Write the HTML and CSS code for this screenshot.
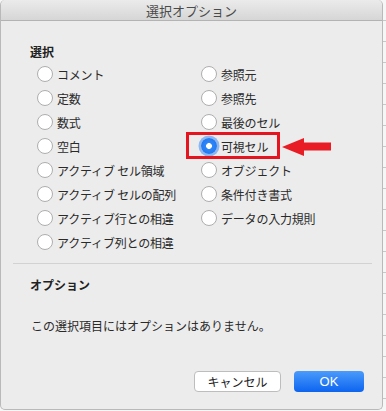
FILE: index.html
```html
<!DOCTYPE html>
<html lang="ja">
<head>
<meta charset="utf-8">
<link rel="stylesheet" href="styles.css">
</head>
<body>
<div class="dialog">
  <div class="titlebar">選択オプション</div>
  <div class="content">
    <div class="heading sel-heading">選択</div>
    <div class="choices">
      <div class="col col-left">
        <label class="row"><span class="radio"></span><span class="lbl">コメント</span></label>
        <label class="row"><span class="radio"></span><span class="lbl">定数</span></label>
        <label class="row"><span class="radio"></span><span class="lbl">数式</span></label>
        <label class="row"><span class="radio"></span><span class="lbl">空白</span></label>
        <label class="row"><span class="radio"></span><span class="lbl">アクティブ セル領域</span></label>
        <label class="row"><span class="radio"></span><span class="lbl">アクティブ セルの配列</span></label>
        <label class="row"><span class="radio"></span><span class="lbl">アクティブ行との相違</span></label>
        <label class="row"><span class="radio"></span><span class="lbl">アクティブ列との相違</span></label>
      </div>
      <div class="col col-right">
        <label class="row"><span class="radio"></span><span class="lbl">参照元</span></label>
        <label class="row"><span class="radio"></span><span class="lbl">参照先</span></label>
        <label class="row"><span class="radio"></span><span class="lbl">最後のセル</span></label>
        <label class="row row-selected"><span class="radio checked"></span><span class="lbl">可視セル</span>
          <span class="highlight"></span>
          <svg class="arrow" width="50" height="20" viewBox="0 0 50 20"><polygon points="0,10 22,1 22,5.5 49,5.5 49,13.5 22,13.5 22,19" fill="#e81c24"/></svg>
        </label>
        <label class="row"><span class="radio"></span><span class="lbl">オブジェクト</span></label>
        <label class="row"><span class="radio"></span><span class="lbl">条件付き書式</span></label>
        <label class="row"><span class="radio"></span><span class="lbl">データの入力規則</span></label>
      </div>
    </div>
    <div class="separator"></div>
    <div class="heading opt-heading">オプション</div>
    <div class="note">この選択項目にはオプションはありません。</div>
    <div class="buttons">
      <button class="btn btn-cancel">キャンセル</button>
      <button class="btn btn-ok">OK</button>
    </div>
  </div>
</div>
</body>
</html>
```

FILE: styles.css
```css
html, body {
  margin: 0;
  padding: 0;
}
body {
  width: 386px;
  height: 411px;
  overflow: hidden;
  background-color: #f6f6f6;
  background-image: repeating-linear-gradient(to bottom, transparent 0, transparent 20px, #c8c8c8 20px, #c8c8c8 21px);
  font-family: "Noto Sans CJK JP", "Noto Sans", sans-serif;
  color: #2a2a2a;
}
.dialog {
  box-sizing: border-box;
  width: 383px;
  height: 410px;
  background: #ececec;
  border: 1px solid #b9b9b9;
  border-top: none;
  border-radius: 5px;
  display: flex;
  flex-direction: column;
  overflow: hidden;
}
.titlebar {
  height: 20px;
  border-bottom: 1px solid #b3b3b3;
  background: linear-gradient(to bottom, #ebebeb, #d6d6d6);
  text-align: center;
  font-size: 13px;
  line-height: 21px;
  color: #4a4a4a;
  border-radius: 5px 5px 0 0;
}
.content {
  flex: 1;
  display: flex;
  flex-direction: column;
  padding: 23px 0 17px 0;
}
.heading {
  font-size: 12px;
  font-weight: bold;
  line-height: 16px;
  height: 16px;
  color: #222;
  padding-left: 29px;
}
.choices {
  display: flex;
  margin-top: 2px;
  padding-left: 36px;
}
.col {
  display: flex;
  flex-direction: column;
}
.col-left {
  width: 164px;
}
.row {
  position: relative;
  height: 24px;
  display: flex;
  align-items: center;
  font-size: 12px;
}
.radio {
  box-sizing: border-box;
  width: 16px;
  height: 16px;
  border-radius: 50%;
  background: #fff;
  border: 1px solid #aeaeae;
  margin-right: 4px;
  flex: none;
}
.radio.checked {
  border: none;
  background: radial-gradient(circle, #fff 0, #fff 2.6px, #2f86f6 3.2px, #1a6ff0 100%);
  box-shadow: 0 0 0 2.5px rgba(110, 165, 240, 0.75);
}
.lbl {
  white-space: nowrap;
  letter-spacing: -0.2px;
}
.highlight {
  position: absolute;
  left: -15px;
  top: -2px;
  width: 94px;
  height: 27px;
  box-sizing: border-box;
  border: 3px solid #e6141f;
}
.arrow {
  position: absolute;
  left: 81px;
  top: 3px;
}
.separator {
  height: 1px;
  background: #d2d2d2;
  margin: 9px 10px 0 12px;
}
.opt-heading {
  margin-top: 13px;
}
.note {
  font-size: 12px;
  line-height: 16px;
  padding-left: 30px;
  margin-top: 25px;
  color: #2a2a2a;
}
.buttons {
  margin-top: auto;
  display: flex;
  justify-content: flex-end;
  gap: 13px;
  padding-right: 18px;
}
.btn {
  box-sizing: border-box;
  height: 21px;
  border-radius: 4px;
  font-family: "Noto Sans CJK JP", "Noto Sans", sans-serif;
  font-size: 12px;
  line-height: 19px;
  padding: 0;
  margin: 0;
}
.btn-cancel {
  width: 87px;
  background: #fff;
  border: 1px solid #bdbdbd;
  color: #222;
}
.btn-ok {
  width: 70px;
  border: none;
  background: linear-gradient(to bottom, #4b9bfb, #0d64ef);
  color: #fff;
  font-family: "Liberation Sans", Arial, sans-serif;
  font-size: 13px;
}
```
